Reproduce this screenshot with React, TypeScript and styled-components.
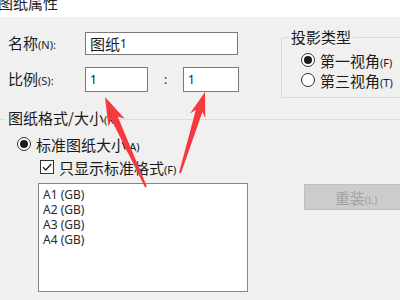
import styled, { createGlobalStyle } from "styled-components";

const GlobalStyle = createGlobalStyle`
  html, body {
    margin: 0;
    padding: 0;
    background: #f0f0f0;
  }
  body {
    font-family: "Noto Sans CJK SC", "Noto Sans", sans-serif;
    color: #1a1a1a;
  }
`;

type Arrow = { tip: [number, number]; tail: [number, number]; head: number; half: number };

const arrows: Arrow[] = [
  { tip: [105, 97], tail: [146, 187], head: 28, half: 9 },
  { tip: [205, 92], tail: [180, 173], head: 25, half: 8 },
];

// polygon for a tapered red arrow, tip to tail
function arrowPoints(a: Arrow) {
  const [tx, ty] = a.tip;
  const [sx, sy] = a.tail;
  const len = Math.hypot(tx - sx, ty - sy);
  const ux = (tx - sx) / len;
  const uy = (ty - sy) / len;
  const nx = -uy;
  const ny = ux;
  const bx = tx - ux * a.head;
  const by = ty - uy * a.head;
  const kx = tx - ux * (a.head - 5);
  const ky = ty - uy * (a.head - 5);
  const pts = [
    [tx, ty],
    [bx + nx * a.half, by + ny * a.half],
    [kx + nx * 3.5, ky + ny * 3.5],
    [sx + nx * 1, sy + ny * 1],
    [sx - nx * 1, sy - ny * 1],
    [kx - nx * 3.5, ky - ny * 3.5],
    [bx - nx * a.half, by - ny * a.half],
  ];
  return pts.map(p => `${p[0].toFixed(1)},${p[1].toFixed(1)}`).join(" ");
}

export default function App() {
  return (
    <Page>
      <GlobalStyle />
      <TitleBar>
        <TitleText>图纸属性</TitleText>
      </TitleBar>

      <TopRow>
        <Fields>
          <FieldRow>
            <Label>名称<Key>(N):</Key></Label>
            <TextBox $width={153} $height={23}>图纸<Small>1</Small></TextBox>
          </FieldRow>
          <FieldRow>
            <Label>比例<Key>(S):</Key></Label>
            <TextBox $width={63} $height={25}><Small>1</Small></TextBox>
            <Colon>:</Colon>
            <TextBox $width={56} $height={25}><Small>1</Small></TextBox>
          </FieldRow>
        </Fields>

        <ProjectionGroup>
          <Legend>投影类型</Legend>
          <OptionRow $indent={19}>
            <Radio $checked />
            <span>第一视角<Key>(F)</Key></span>
          </OptionRow>
          <OptionRow $indent={19}>
            <Radio />
            <span>第三视角<Key>(T)</Key></span>
          </OptionRow>
        </ProjectionGroup>
      </TopRow>

      <SheetGroup>
        <SheetLegend>图纸格式/大小<Key>(R)</Key></SheetLegend>
        <OptionRow $indent={17}>
          <Radio $checked />
          <span>标准图纸大小<Key>(A)</Key></span>
        </OptionRow>
        <OptionRow $indent={40}>
          <CheckBox>
            <svg width="12" height="12" viewBox="0 0 12 12">
              <path d="M2 6.2 L4.8 9 L10.2 3" fill="none" stroke="#222" strokeWidth="1.3" />
            </svg>
          </CheckBox>
          <span>只显示标准格式<Key>(F)</Key></span>
        </OptionRow>
        <ListRow>
          <ListBox>
            {["A1 (GB)", "A2 (GB)", "A3 (GB)", "A4 (GB)"].map(item => (
              <ListItem key={item}>{item}</ListItem>
            ))}
          </ListBox>
          <ReloadButton disabled>重装<Key>(L)</Key></ReloadButton>
        </ListRow>
      </SheetGroup>

      <Overlay width="400" height="300" viewBox="0 0 400 300">
        {arrows.map((a, i) => (
          <polygon key={i} points={arrowPoints(a)} fill="#f53a3f" />
        ))}
      </Overlay>
    </Page>
  );
}

const Page = styled.div`
  position: relative;
  width: 400px;
  height: 300px;
  overflow: hidden;
  background: #f0f0f0;
  font-size: 15px;
`;

const TitleBar = styled.div`
  height: 17px;
  background: #ffffff;
  overflow: hidden;
`;

const TitleText = styled.div`
  margin: -7px 0 0 -2px;
  line-height: 20px;
  font-size: 15px;
  color: #222;
`;

const TopRow = styled.div`
  display: flex;
  padding-left: 8px;
`;

const Fields = styled.div`
  flex-shrink: 0;
  width: 231px;
  padding-top: 15px;
  display: flex;
  flex-direction: column;
  gap: 12px;
`;

const FieldRow = styled.div`
  display: flex;
  align-items: center;
`;

const Label = styled.div`
  width: 77px;
  font-size: 15px;
  line-height: 18px;
  white-space: nowrap;
`;

const Key = styled.span`
  font-family: "Noto Sans", "Open Sans", sans-serif;
  font-size: 11px;
`;

const TextBox = styled.div<{ $width: number; $height: number }>`
  box-sizing: border-box;
  width: ${p => p.$width}px;
  height: ${p => p.$height}px;
  background: #ffffff;
  border: 1px solid #7a7a7a;
  padding: 0 4px;
  display: flex;
  align-items: center;
  font-size: 15px;
  white-space: nowrap;
`;

const Small = styled.span`
  font-family: "Noto Sans", "Open Sans", sans-serif;
  font-size: 12px;
`;

const Colon = styled.div`
  width: 35px;
  text-align: center;
  font-family: "Noto Sans", sans-serif;
  font-size: 12px;
`;

const ProjectionGroup = styled.fieldset`
  flex-shrink: 0;
  box-sizing: border-box;
  width: 140px;
  height: 70px;
  margin: 11px 0 0 42px;
  padding: 4px 0 0 0;
  border: 1px solid #d8d8d8;
  border-radius: 2px;
`;

const Legend = styled.legend`
  margin-left: 7px;
  padding: 0 2px;
  font-size: 15px;
  line-height: 18px;
`;

const OptionRow = styled.div<{ $indent: number }>`
  display: flex;
  align-items: center;
  gap: 5px;
  height: 20px;
  padding-left: ${p => p.$indent}px;
  font-size: 15px;
  white-space: nowrap;
`;

const Radio = styled.span<{ $checked?: boolean }>`
  box-sizing: border-box;
  width: 14px;
  height: 14px;
  flex-shrink: 0;
  border-radius: 50%;
  border: 1px solid #333;
  background: #fff;
  display: flex;
  align-items: center;
  justify-content: center;

  &::after {
    content: "";
    width: 8px;
    height: 8px;
    border-radius: 50%;
    background: ${p => (p.$checked ? "#1c1c1c" : "transparent")};
  }
`;

const CheckBox = styled.span`
  box-sizing: border-box;
  width: 14px;
  height: 14px;
  flex-shrink: 0;
  border: 1px solid #333;
  background: #fff;
  display: flex;
  align-items: center;
  justify-content: center;
`;

const SheetGroup = styled.fieldset`
  margin: 11px 0 0 0;
  padding: 5px 0 0 0;
  border: none;
  border-top: 1px solid #dcdcdc;
  display: flex;
  flex-direction: column;
  gap: 3px;
`;

const SheetLegend = styled.legend`
  margin-left: 6px;
  padding: 0 2px;
  font-size: 15px;
  line-height: 18px;
`;

const ListRow = styled.div`
  display: flex;
  align-items: flex-start;
  gap: 56px;
  padding: 3px 0 0 38px;
`;

const ListBox = styled.div`
  box-sizing: border-box;
  width: 210px;
  height: 109px;
  flex-shrink: 0;
  background: #fff;
  border: 1px solid #828790;
  padding: 3px 0 0 4px;
`;

const ListItem = styled.div`
  font-family: "Noto Sans", "Open Sans", sans-serif;
  font-size: 12px;
  line-height: 15px;
  color: #2a2a2a;
`;

const ReloadButton = styled.button`
  box-sizing: border-box;
  flex-shrink: 0;
  width: 104px;
  height: 26px;
  margin-top: 1px;
  background: #cccccc;
  border: 1px solid #bfbfbf;
  color: #a3a3a3;
  font-family: "Noto Sans CJK SC", sans-serif;
  font-size: 15px;
  padding: 0;
`;

const Overlay = styled.svg`
  position: absolute;
  left: 0;
  top: 0;
  pointer-events: none;
`;
